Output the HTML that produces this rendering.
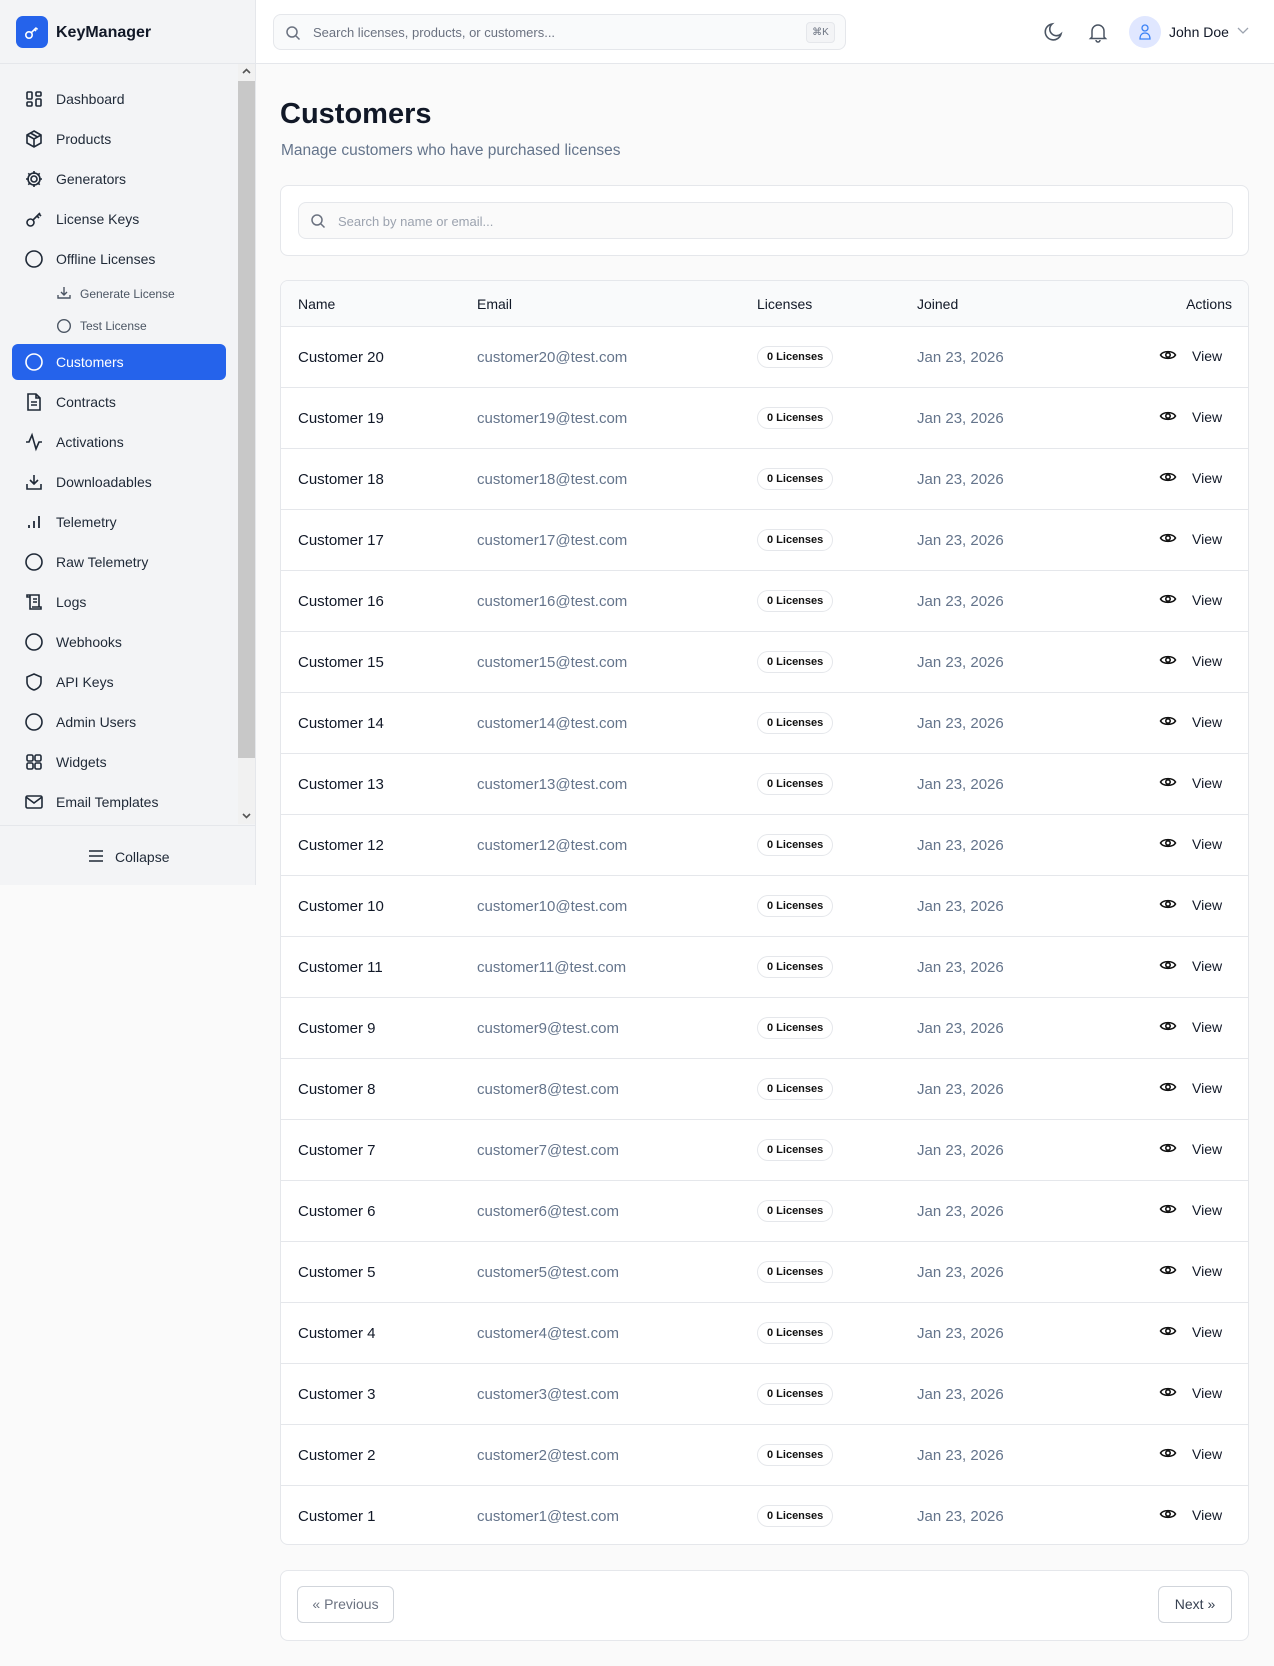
<!DOCTYPE html>
<html><head><meta charset="utf-8"><style>
*{box-sizing:border-box;margin:0;padding:0}
body{width:1274px;height:1666px;background:#fafafa;font-family:"Liberation Sans",sans-serif;color:#111827;position:relative;overflow:hidden}
.sb{position:absolute;left:0;top:0;width:256px;height:885px;background:#f3f4f6;border-right:1px solid #e5e7eb}
.logo{position:absolute;left:16px;top:16px;width:32px;height:32px;border-radius:7px;background:#2563eb}
.brand{position:absolute;left:56px;top:24px;font-size:16px;font-weight:bold;color:#111827}
.hl{position:absolute;left:0;top:63px;width:256px;border-top:1px solid #e5e7eb}
.scr{position:absolute;left:238px;top:64px;width:17px;height:760px;background:#f1f1f1}
.thumb{position:absolute;left:238px;top:81px;width:17px;height:677px;background:#c8c8c8}
.ni{position:absolute;left:56px;font-size:14px;color:#1f2937}
.ic{position:absolute;left:24px;width:20px;height:20px}
.sub{position:absolute;left:80px;font-size:12px;color:#4b5563}
.act{position:absolute;left:12px;top:344px;width:214px;height:36px;background:#2563eb;border-radius:6px}
.hdr{position:absolute;left:256px;top:0;width:1018px;height:64px;background:#fff;border-bottom:1px solid #e5e7eb}
.gs{position:absolute;left:273px;top:14px;width:573px;height:36px;border:1px solid #e5e7eb;border-radius:8px;background:#f9fafb}
.card{position:absolute;left:280px;width:969px;background:#fff;border:1px solid #e5e7eb;border-radius:8px}
.row{position:absolute;left:0;width:967px;height:61px;border-top:1px solid #e5e7eb;font-size:15px}
.row span{position:absolute;top:22px}
.badge{position:absolute;left:476px;top:19px;height:22px;padding:0 9px;border:1px solid #e5e7eb;border-radius:11px;font-size:11px;font-weight:bold;line-height:20px;color:#111}
.btn{position:absolute;top:1586px;height:37px;border:1px solid #d1d5db;border-radius:6px;background:#fff;font-size:14px;line-height:35px;text-align:center}
</style></head><body>
<div class="sb">
<div class="logo"><svg width="32" height="32" viewBox="0 0 32 32" fill="none" stroke="#fff" stroke-width="1.6"><circle cx="13" cy="19" r="3.2"/><path d="M15.3 16.7l5-5M18.5 13.5l1.5 1.5M20 12l1.5 1.5"/></svg></div>
<div class="brand">KeyManager</div>
<div class="hl"></div>
<div class="scr"></div><div class="thumb"></div>
<svg style="position:absolute;left:241px;top:67px" width="11" height="8" viewBox="0 0 11 8"><path d="M2 6l3.5-3.5L9 6" stroke="#555" stroke-width="1.6" fill="none"/></svg>
<svg style="position:absolute;left:241px;top:812px" width="11" height="8" viewBox="0 0 11 8"><path d="M2 2l3.5 3.5L9 2" stroke="#555" stroke-width="1.6" fill="none"/></svg>

<svg class="ic" style="top:89px" viewBox="0 0 20 20" fill="none" stroke="#1f2937" stroke-width="1.6"><rect x="3" y="3" width="5" height="7" rx="1"/><rect x="12" y="3" width="5" height="4" rx="1"/><rect x="12" y="10" width="5" height="7" rx="1"/><rect x="3" y="13" width="5" height="4" rx="1"/></svg><div class="ni" style="top:91px">Dashboard</div>
<svg class="ic" style="top:129px" viewBox="0 0 20 20" fill="none" stroke="#1f2937" stroke-width="1.6"><path d="M10 2l7 4v8l-7 4-7-4V6zM3 6l7 4 7-4M10 10v8M6.5 4l7 4"/></svg><div class="ni" style="top:131px">Products</div>
<svg class="ic" style="top:169px" viewBox="0 0 20 20" fill="none" stroke="#1f2937" stroke-width="1.6"><circle cx="10" cy="10" r="3"/><path d="M10 2v3M10 15v3M2 10h3M15 10h3M4.3 4.3l2.1 2.1M13.6 13.6l2.1 2.1M4.3 15.7l2.1-2.1M13.6 6.4l2.1-2.1"/><circle cx="10" cy="10" r="6"/></svg><div class="ni" style="top:171px">Generators</div>
<svg class="ic" style="top:209px" viewBox="0 0 20 20" fill="none" stroke="#1f2937" stroke-width="1.6"><circle cx="6.5" cy="13.5" r="3.5"/><path d="M9 11l7-7M13 7l2 2M15 5l2 2"/></svg><div class="ni" style="top:211px">License Keys</div>
<svg class="ic" style="top:249px" viewBox="0 0 20 20" fill="none" stroke="#1f2937" stroke-width="1.6"><circle cx="10" cy="10" r="8"/></svg><div class="ni" style="top:251px">Offline Licenses</div>
<svg style="position:absolute;left:56px;top:285px" width="16" height="16" viewBox="0 0 16 16" fill="none" stroke="#4b5563" stroke-width="1.4"><path d="M8 2v8M5 7l3 3 3-3M2 10v3h12v-3"/></svg><div class="sub" style="top:287px">Generate License</div>
<svg style="position:absolute;left:56px;top:318px" width="16" height="16" viewBox="0 0 16 16" fill="none" stroke="#4b5563" stroke-width="1.4"><circle cx="8" cy="8" r="6.3"/></svg><div class="sub" style="top:319px">Test License</div>
<div class="act"></div>
<svg class="ic" style="top:352px" viewBox="0 0 20 20" fill="none" stroke="#fff" stroke-width="1.6"><circle cx="10" cy="10" r="8"/></svg><div class="ni" style="top:354px;color:#fff">Customers</div>
<svg class="ic" style="top:392px" viewBox="0 0 20 20" fill="none" stroke="#1f2937" stroke-width="1.6"><path d="M4 2h8l4 4v12H4zM12 2v4h4M7 10h6M7 13h6"/></svg><div class="ni" style="top:394px">Contracts</div>
<svg class="ic" style="top:432px" viewBox="0 0 20 20" fill="none" stroke="#1f2937" stroke-width="1.6"><path d="M2 10h3l3-7 4 14 3-7h3"/></svg><div class="ni" style="top:434px">Activations</div>
<svg class="ic" style="top:472px" viewBox="0 0 20 20" fill="none" stroke="#1f2937" stroke-width="1.6"><path d="M10 3v9M6 8l4 4 4-4M3 12v5h14v-5"/></svg><div class="ni" style="top:474px">Downloadables</div>
<svg class="ic" style="top:512px" viewBox="0 0 20 20" fill="none" stroke="#1f2937" stroke-width="1.8"><path d="M5 16v-3M10 16V9M15 16V4"/></svg><div class="ni" style="top:514px">Telemetry</div>
<svg class="ic" style="top:552px" viewBox="0 0 20 20" fill="none" stroke="#1f2937" stroke-width="1.6"><circle cx="10" cy="10" r="8"/></svg><div class="ni" style="top:554px">Raw Telemetry</div>
<svg class="ic" style="top:592px" viewBox="0 0 20 20" fill="none" stroke="#1f2937" stroke-width="1.6"><path d="M3 3h3v2H3zM6 3h9v12M6 5v12h11v-2H8M9 7h4M9 10h4"/></svg><div class="ni" style="top:594px">Logs</div>
<svg class="ic" style="top:632px" viewBox="0 0 20 20" fill="none" stroke="#1f2937" stroke-width="1.6"><circle cx="10" cy="10" r="8"/></svg><div class="ni" style="top:634px">Webhooks</div>
<svg class="ic" style="top:672px" viewBox="0 0 20 20" fill="none" stroke="#1f2937" stroke-width="1.6"><path d="M10 2l7 3v5c0 4-3 7-7 8-4-1-7-4-7-8V5z"/></svg><div class="ni" style="top:674px">API Keys</div>
<svg class="ic" style="top:712px" viewBox="0 0 20 20" fill="none" stroke="#1f2937" stroke-width="1.6"><circle cx="10" cy="10" r="8"/></svg><div class="ni" style="top:714px">Admin Users</div>
<svg class="ic" style="top:752px" viewBox="0 0 20 20" fill="none" stroke="#1f2937" stroke-width="1.6"><rect x="3" y="3" width="6" height="6" rx="1.5"/><rect x="11" y="3" width="6" height="6" rx="1.5"/><rect x="3" y="11" width="6" height="6" rx="1.5"/><rect x="11" y="11" width="6" height="6" rx="1.5"/></svg><div class="ni" style="top:754px">Widgets</div>
<svg class="ic" style="top:792px" viewBox="0 0 20 20" fill="none" stroke="#1f2937" stroke-width="1.6"><rect x="2" y="4" width="16" height="12" rx="1.5"/><path d="M2 5l8 6 8-6"/></svg><div class="ni" style="top:794px">Email Templates</div>
<div style="position:absolute;left:0;top:825px;width:256px;border-top:1px solid #e5e7eb"></div>
<svg style="position:absolute;left:87px;top:848px" width="18" height="16" viewBox="0 0 18 16" stroke="#1f2937" stroke-width="1.6"><path d="M2 3h14M2 8h14M2 13h14"/></svg>
<div class="ni" style="left:115px;top:849px">Collapse</div>
</div>

<div class="hdr"></div>
<div class="gs"><svg style="position:absolute;left:11px;top:10px" width="16" height="16" viewBox="0 0 16 16" fill="none" stroke="#6b7280" stroke-width="1.5"><circle cx="7" cy="7" r="5"/><path d="M11 11l3.5 3.5"/></svg><span style="position:absolute;left:39px;top:10px;font-size:13px;color:#6b7280">Search licenses, products, or customers...</span><span style="position:absolute;right:10px;top:7px;width:29px;height:21px;border:1px solid #e5e7eb;border-radius:4px;background:#f3f4f6;font-size:10px;color:#6b7280;text-align:center;line-height:19px">⌘K</span></div>
<svg style="position:absolute;left:1043px;top:21px" width="22" height="22" viewBox="0 0 22 22" fill="none" stroke="#4b5563" stroke-width="1.6"><path d="M18 13A8 8 0 1 1 9 3a6.5 6.5 0 0 0 9 10z"/></svg>
<svg style="position:absolute;left:1087px;top:21px" width="22" height="22" viewBox="0 0 22 22" fill="none" stroke="#4b5563" stroke-width="1.5"><path d="M5 16V10a6 6 0 0 1 12 0v6l1.5 1.5h-15zM9 19a2 2 0 0 0 4 0"/></svg>
<div style="position:absolute;left:1129px;top:16px;width:32px;height:32px;border-radius:50%;background:#e0e7ff"></div>
<svg style="position:absolute;left:1137px;top:23px" width="16" height="18" viewBox="0 0 16 18" fill="none" stroke="#3b82f6" stroke-width="1.3"><circle cx="8" cy="5" r="3"/><path d="M3 16c0-4 2-6 5-6s5 2 5 6z"/></svg>
<div style="position:absolute;left:1169px;top:24px;font-size:14px">John Doe</div>
<svg style="position:absolute;left:1236px;top:26px" width="14" height="10" viewBox="0 0 14 10" fill="none" stroke="#9ca3af" stroke-width="1.3"><path d="M2 2l5 5 5-5"/></svg>

<div style="position:absolute;left:280px;top:98px;font-size:29px;font-weight:bold;color:#111827">Customers</div>
<div style="position:absolute;left:281px;top:142px;font-size:15.5px;color:#64748b">Manage customers who have purchased licenses</div>

<div class="card" style="top:185px;height:71px"><div style="position:absolute;left:17px;top:16px;width:935px;height:37px;border:1px solid #e5e7eb;border-radius:8px;background:#fafafa"><svg style="position:absolute;left:11px;top:10px" width="16" height="16" viewBox="0 0 16 16" fill="none" stroke="#6b7280" stroke-width="1.5"><circle cx="7" cy="7" r="5"/><path d="M11 11l3.5 3.5"/></svg><span style="position:absolute;left:39px;top:11px;font-size:13px;color:#9ca3af">Search by name or email...</span></div></div>

<div class="card" style="top:280px;height:1265px;overflow:hidden">
<div style="position:absolute;left:0;top:0;width:967px;height:45px;background:#f9fafb;font-size:14px">
<span style="position:absolute;left:17px;top:15px">Name</span><span style="position:absolute;left:196px;top:15px">Email</span><span style="position:absolute;left:476px;top:15px">Licenses</span><span style="position:absolute;left:636px;top:15px">Joined</span><span style="position:absolute;right:16px;top:15px">Actions</span></div>
<div id="rows"></div>
</div>

<div class="card" style="top:1570px;height:71px"></div>
<div class="btn" style="left:297px;width:97px;color:#6b7280">« Previous</div>
<div class="btn" style="left:1158px;width:74px;color:#374151">Next »</div>

<script>
var n=[20,19,18,17,16,15,14,13,12,10,11,9,8,7,6,5,4,3,2,1],h='';
n.forEach(function(v,i){h+='<div class="row" style="top:'+(45+i*61)+'px"><span style="left:17px">Customer '+v+'</span><span style="left:196px;color:#64748b">customer'+v+'@test.com</span><div class="badge">0 Licenses</div><span style="left:636px;color:#64748b">Jan 23, 2026</span><svg style="position:absolute;left:878px;top:21px" width="18" height="14" viewBox="0 0 18 14" fill="none" stroke="#111" stroke-width="1.6"><path d="M1.5 7C4 2.5 14 2.5 16.5 7 14 11.5 4 11.5 1.5 7z"/><circle cx="9" cy="7" r="2.2"/></svg><span style="left:911px;font-size:14px;top:21px">View</span></div>';});
document.getElementById('rows').innerHTML=h;
</script>
</body></html>
